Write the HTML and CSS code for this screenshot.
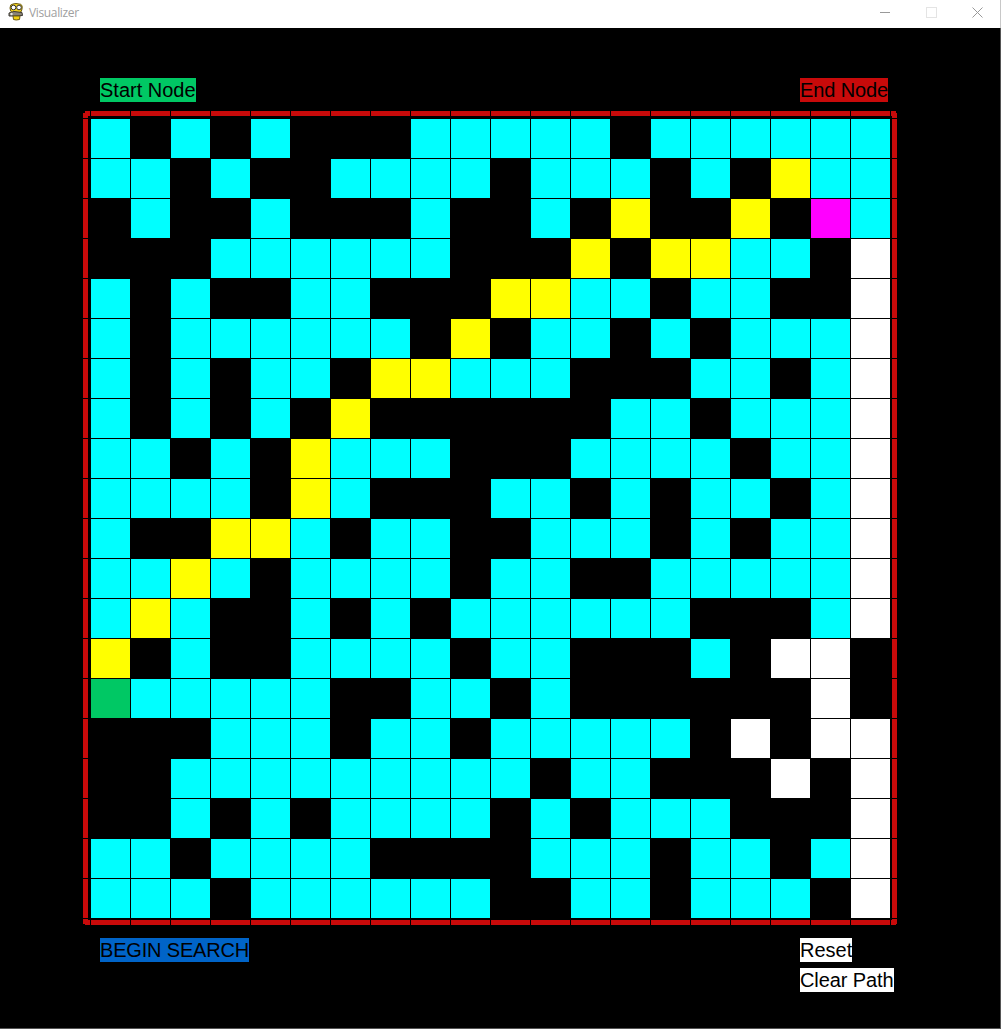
FILE: index.html
```html
<!DOCTYPE html>
<html lang="en">
<head>
<meta charset="utf-8">
<title>Visualizer</title>
<link rel="stylesheet" href="styles.css">
</head>
<body>
<div class="window">
  <header class="titlebar">
    <svg class="app-icon" width="16" height="18" viewBox="0 0 16 18">
      <path d="M2 5 Q2 1 5 1 Q8 0 11 1 Q15 1 14 6 Q14 9 11 10 L5 10 Q2 9 2 5Z" fill="#f2d21c" stroke="#6b5a10" stroke-width="1"/>
      <circle cx="5.5" cy="4.5" r="2.3" fill="#fff" stroke="#333" stroke-width="1"/>
      <circle cx="11" cy="4.5" r="2.3" fill="#fff" stroke="#333" stroke-width="1"/>
      <path d="M1 10 L6 8.5 L14 9.5 L14.5 12.5 L6 13 L1 13Z" fill="#8a8478" stroke="#3b3832" stroke-width="1"/>
      <circle cx="3.5" cy="11" r="1.2" fill="#e8e8e0"/>
      <path d="M5 13 L12 13 L11.5 16.5 Q8 17.5 5.5 16.5Z" fill="#f0d010" stroke="#6b5a10" stroke-width="1"/>
    </svg>
    <span class="app-title">Visualizer</span>
    <div class="controls">
      <span class="control"><svg width="11" height="11" viewBox="0 0 11 11"><path d="M0 5.5H10" stroke="#999" fill="none"/></svg></span>
      <span class="control"><svg width="11" height="11" viewBox="0 0 11 11"><rect x="0.5" y="0.5" width="10" height="10" stroke="#e4e4e4" fill="none"/></svg></span>
      <span class="control"><svg width="11" height="11" viewBox="0 0 11 11"><path d="M0.5 0.5L10.5 10.5M10.5 0.5L0.5 10.5" stroke="#999" fill="none"/></svg></span>
    </div>
  </header>
  <main class="canvas">
    <div class="label-row top">
      <div class="label-col"><span class="label start">Start Node</span></div>
      <div class="label-col"><span class="label end">End Node</span></div>
    </div>
    <div class="frame">
      <div class="rail rail-top">
        <b class="tip"></b><b></b><b></b><b></b><b></b><b></b><b></b><b></b><b></b><b></b><b></b><b></b><b></b><b></b><b></b><b></b><b></b><b></b><b></b><b></b><b></b><b class="tip"></b>
      </div>
      <div class="rail rail-left">
        <b class="tip"></b><b></b><b></b><b></b><b></b><b></b><b></b><b></b><b></b><b></b><b></b><b></b><b></b><b></b><b></b><b></b><b></b><b></b><b></b><b></b><b></b><b class="tip"></b>
      </div>
      <div class="rail rail-right">
        <b class="tip"></b><b></b><b></b><b></b><b></b><b></b><b></b><b></b><b></b><b></b><b></b><b></b><b></b><b></b><b></b><b></b><b></b><b></b><b></b><b></b><b></b><b class="tip"></b>
      </div>
      <div class="rail rail-bottom">
        <b class="tip"></b><b></b><b></b><b></b><b></b><b></b><b></b><b></b><b></b><b></b><b></b><b></b><b></b><b></b><b></b><b></b><b></b><b></b><b></b><b></b><b></b><b class="tip"></b>
      </div>
      <div class="grid">
        <i class="c"></i><i></i><i class="c"></i><i></i><i class="c"></i><i></i><i></i><i></i><i class="c"></i><i class="c"></i><i class="c"></i><i class="c"></i><i class="c"></i><i></i><i class="c"></i><i class="c"></i><i class="c"></i><i class="c"></i><i class="c"></i><i class="c"></i>
        <i class="c"></i><i class="c"></i><i></i><i class="c"></i><i></i><i></i><i class="c"></i><i class="c"></i><i class="c"></i><i class="c"></i><i></i><i class="c"></i><i class="c"></i><i class="c"></i><i></i><i class="c"></i><i></i><i class="y"></i><i class="c"></i><i class="c"></i>
        <i></i><i class="c"></i><i></i><i></i><i class="c"></i><i></i><i></i><i></i><i class="c"></i><i></i><i></i><i class="c"></i><i></i><i class="y"></i><i></i><i></i><i class="y"></i><i></i><i class="m"></i><i class="c"></i>
        <i></i><i></i><i></i><i class="c"></i><i class="c"></i><i class="c"></i><i class="c"></i><i class="c"></i><i class="c"></i><i></i><i></i><i></i><i class="y"></i><i></i><i class="y"></i><i class="y"></i><i class="c"></i><i class="c"></i><i></i><i class="w"></i>
        <i class="c"></i><i></i><i class="c"></i><i></i><i></i><i class="c"></i><i class="c"></i><i></i><i></i><i></i><i class="y"></i><i class="y"></i><i class="c"></i><i class="c"></i><i></i><i class="c"></i><i class="c"></i><i></i><i></i><i class="w"></i>
        <i class="c"></i><i></i><i class="c"></i><i class="c"></i><i class="c"></i><i class="c"></i><i class="c"></i><i class="c"></i><i></i><i class="y"></i><i></i><i class="c"></i><i class="c"></i><i></i><i class="c"></i><i></i><i class="c"></i><i class="c"></i><i class="c"></i><i class="w"></i>
        <i class="c"></i><i></i><i class="c"></i><i></i><i class="c"></i><i class="c"></i><i></i><i class="y"></i><i class="y"></i><i class="c"></i><i class="c"></i><i class="c"></i><i></i><i></i><i></i><i class="c"></i><i class="c"></i><i></i><i class="c"></i><i class="w"></i>
        <i class="c"></i><i></i><i class="c"></i><i></i><i class="c"></i><i></i><i class="y"></i><i></i><i></i><i></i><i></i><i></i><i></i><i class="c"></i><i class="c"></i><i></i><i class="c"></i><i class="c"></i><i class="c"></i><i class="w"></i>
        <i class="c"></i><i class="c"></i><i></i><i class="c"></i><i></i><i class="y"></i><i class="c"></i><i class="c"></i><i class="c"></i><i></i><i></i><i></i><i class="c"></i><i class="c"></i><i class="c"></i><i class="c"></i><i></i><i class="c"></i><i class="c"></i><i class="w"></i>
        <i class="c"></i><i class="c"></i><i class="c"></i><i class="c"></i><i></i><i class="y"></i><i class="c"></i><i></i><i></i><i></i><i class="c"></i><i class="c"></i><i></i><i class="c"></i><i></i><i class="c"></i><i class="c"></i><i></i><i class="c"></i><i class="w"></i>
        <i class="c"></i><i></i><i></i><i class="y"></i><i class="y"></i><i class="c"></i><i></i><i class="c"></i><i class="c"></i><i></i><i></i><i class="c"></i><i class="c"></i><i class="c"></i><i></i><i class="c"></i><i></i><i class="c"></i><i class="c"></i><i class="w"></i>
        <i class="c"></i><i class="c"></i><i class="y"></i><i class="c"></i><i></i><i class="c"></i><i class="c"></i><i class="c"></i><i class="c"></i><i></i><i class="c"></i><i class="c"></i><i></i><i></i><i class="c"></i><i class="c"></i><i class="c"></i><i class="c"></i><i class="c"></i><i class="w"></i>
        <i class="c"></i><i class="y"></i><i class="c"></i><i></i><i></i><i class="c"></i><i></i><i class="c"></i><i></i><i class="c"></i><i class="c"></i><i class="c"></i><i class="c"></i><i class="c"></i><i class="c"></i><i></i><i></i><i></i><i class="c"></i><i class="w"></i>
        <i class="y"></i><i></i><i class="c"></i><i></i><i></i><i class="c"></i><i class="c"></i><i class="c"></i><i class="c"></i><i></i><i class="c"></i><i class="c"></i><i></i><i></i><i></i><i class="c"></i><i></i><i class="w"></i><i class="w"></i><i></i>
        <i class="g"></i><i class="c"></i><i class="c"></i><i class="c"></i><i class="c"></i><i class="c"></i><i></i><i></i><i class="c"></i><i class="c"></i><i></i><i class="c"></i><i></i><i></i><i></i><i></i><i></i><i></i><i class="w"></i><i></i>
        <i></i><i></i><i></i><i class="c"></i><i class="c"></i><i class="c"></i><i></i><i class="c"></i><i class="c"></i><i></i><i class="c"></i><i class="c"></i><i class="c"></i><i class="c"></i><i class="c"></i><i></i><i class="w"></i><i></i><i class="w"></i><i class="w"></i>
        <i></i><i></i><i class="c"></i><i class="c"></i><i class="c"></i><i class="c"></i><i class="c"></i><i class="c"></i><i class="c"></i><i class="c"></i><i class="c"></i><i></i><i class="c"></i><i class="c"></i><i></i><i></i><i></i><i class="w"></i><i></i><i class="w"></i>
        <i></i><i></i><i class="c"></i><i></i><i class="c"></i><i></i><i class="c"></i><i class="c"></i><i class="c"></i><i class="c"></i><i></i><i class="c"></i><i></i><i class="c"></i><i class="c"></i><i class="c"></i><i></i><i></i><i></i><i class="w"></i>
        <i class="c"></i><i class="c"></i><i></i><i class="c"></i><i class="c"></i><i class="c"></i><i class="c"></i><i></i><i></i><i></i><i></i><i class="c"></i><i class="c"></i><i class="c"></i><i></i><i class="c"></i><i class="c"></i><i></i><i class="c"></i><i class="w"></i>
        <i class="c"></i><i class="c"></i><i class="c"></i><i></i><i class="c"></i><i class="c"></i><i class="c"></i><i class="c"></i><i class="c"></i><i class="c"></i><i></i><i></i><i class="c"></i><i class="c"></i><i></i><i class="c"></i><i class="c"></i><i class="c"></i><i></i><i class="w"></i>
      </div>
    </div>
    <div class="label-row bottom">
      <div class="label-col"><span class="label begin">BEGIN SEARCH</span></div>
      <div class="label-col">
        <span class="label plain">Reset</span>
        <span class="label plain tight">Clear Path</span>
      </div>
    </div>
  </main>
</div>
</body>
</html>
```
FILE: styles.css
```css
* { box-sizing: border-box; }
html, body { margin: 0; padding: 0; background: #000; }
.window { width: 1001px; height: 1029px; display: flex; flex-direction: column; overflow: hidden; }

.titlebar {
  height: 28px; flex: none; display: flex; align-items: center;
  background: #fff; border-right: 1px solid #c8c8c8; padding-left: 8px;
}
.app-icon { flex: none; margin-top: -4px; }
.app-title { margin-left: 5px; font: 12px/16px "Open Sans", sans-serif; letter-spacing: -0.35px; color: #a0a0a0; margin-top: -3px; }
.controls { margin-left: auto; display: flex; }
.control { width: 46px; height: 28px; display: flex; align-items: center; justify-content: center; padding-bottom: 4px; }
.control svg { display: block; }

.canvas {
  flex: 1; background: #000; padding-top: 50px;
  border-right: 1px solid #555; border-bottom: 1px solid #555;
}
.label-row { display: grid; grid-template-columns: 700px auto; margin-left: 100px; }
.label-row.top { margin-bottom: 9px; }
.label-row.bottom { margin-top: 13px; }
.label-col { display: flex; flex-direction: column; align-items: flex-start; gap: 6px; }
.label { font: 20px/24px "Liberation Sans", Arial, sans-serif; color: #000; white-space: nowrap; }
.start { background: #00c864; }
.end { background: #c80a0a; letter-spacing: -0.12px; }
.begin { background: #0064c8; letter-spacing: -0.17px; }
.plain { background: #fff; }
.tight { letter-spacing: -0.1px; }

.frame {
  margin-left: 83px; width: 814px; display: grid;
  grid-template-columns: 2px 3px 3px 799px 1px 1px 4px 1px;
  grid-template-rows: 2px 3px 3px 799px 1px 1px 4px 1px;
}
.rail { display: flex; gap: 1px; }
.rail b { display: block; flex: 0 0 39px; background: #c80a0a; }
.rail b.tip { flex-basis: 5px; }
.rail-top { grid-column: 2 / 8; grid-row: 1 / 3; }
.rail-bottom { grid-column: 2 / 8; grid-row: 7 / 9; }
.rail-left { grid-column: 1 / 3; grid-row: 2 / 8; flex-direction: column; }
.rail-right { grid-column: 7 / 9; grid-row: 2 / 8; flex-direction: column; }

.grid {
  grid-column: 4 / 5; grid-row: 4 / 5; display: grid;
  grid-template-columns: repeat(20, 39px); grid-template-rows: repeat(20, 39px); gap: 1px;
}
.c { background: #0ff; }
.y { background: #ff0; }
.m { background: #f0f; }
.w { background: #fff; }
.g { background: #00c864; }
```
